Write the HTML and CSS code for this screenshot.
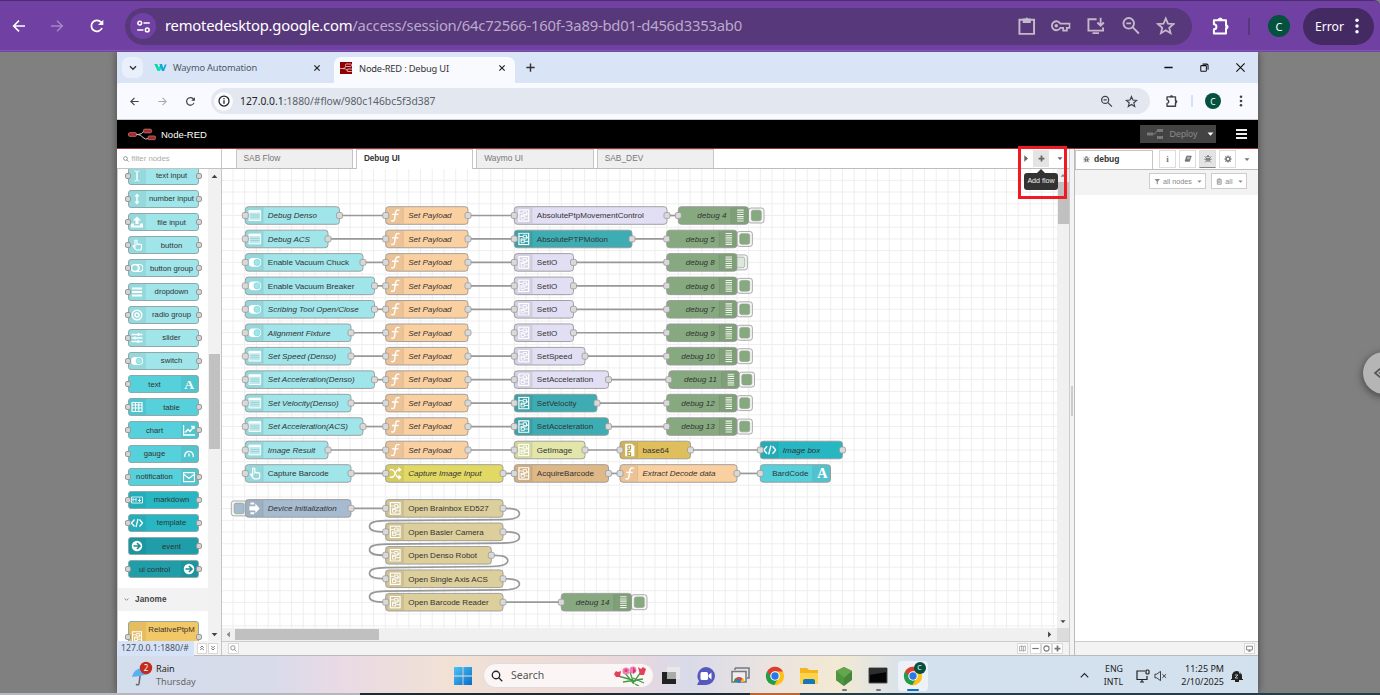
FILE: index.html
```html
<!DOCTYPE html>
<html lang="en">
<head>
<meta charset="utf-8">
<title>Node-RED : Debug UI</title>
<link rel="stylesheet" href="styles.css">
</head>
<body>
<svg class="defs" aria-hidden="true">
  <defs>
    <symbol id="back" viewBox="0 0 24 24"><path d="M21 12H4M12 4l-8 8 8 8" fill="none" stroke="currentColor" stroke-width="2.4"/></symbol>
    <symbol id="fwd" viewBox="0 0 24 24"><path d="M3 12h17M12 4l8 8-8 8" fill="none" stroke="currentColor" stroke-width="2.2"/></symbol>
    <symbol id="reload" viewBox="0 0 24 24"><path d="M19.5 15A8.3 8.3 0 1 1 18 6.2L20.5 9" fill="none" stroke="currentColor" stroke-width="2.6"/><path d="M21.5 2.500v8h-8z" fill="currentColor"/></symbol>
    <symbol id="tune" viewBox="0 0 24 24"><g fill="none" stroke="currentColor" stroke-width="2.4"><circle cx="6" cy="6.500" r="3"/><path d="M12 6.500h10M2 17.500h10"/><circle cx="18" cy="17.500" r="3"/></g></symbol>
    <symbol id="clip" viewBox="0 0 24 24"><path d="M3 4.500h18v17.500H3z" fill="none" stroke="currentColor" stroke-width="2.400"/><path d="M7 3h3.500a1.600 1.600 0 0 1 3 0H17v5.500H7z" fill="currentColor"/></symbol>
    <symbol id="key" viewBox="0 0 24 24"><path d="M11.500 9.500A5.500 5.500 0 1 0 11.500 14.500H15V18h4.500v-3.500H23v-5z" fill="none" stroke="currentColor" stroke-width="2.200"/><circle cx="6.500" cy="12" r="2.200" fill="currentColor"/></symbol>
    <symbol id="install" viewBox="0 0 24 24"><path d="M13 4H3v14h18v-4M8 21h8M18 2v9M14 8l4 4 4-4" fill="none" stroke="currentColor" stroke-width="2.300"/></symbol>
    <symbol id="zoomout" viewBox="0 0 24 24"><g fill="none" stroke="currentColor" stroke-width="2.300"><circle cx="9.500" cy="9" r="6.500"/><path d="M6.500 9h6M14.500 14l7.500 7.500"/></g></symbol>
    <symbol id="search" viewBox="0 0 24 24"><g fill="none" stroke="currentColor" stroke-width="2.600"><circle cx="10" cy="10" r="7.500"/><path d="M15.500 15.500l7 7"/></g></symbol>
    <symbol id="star" viewBox="0 0 24 24"><path d="M12 3l2.700 6.300 6.800.6-5.200 4.500 1.600 6.700L12 17.500l-5.900 3.600 1.600-6.700L2.500 9.900l6.800-.6z" fill="none" stroke="currentColor" stroke-width="2.200"/></symbol>
    <symbol id="puzzle" viewBox="0 0 24 24"><path d="M3.500 5H18v6.500a2 2 0 0 1 0 3.500v6H3.500v-5a3 3 0 0 0 0-6z" fill="none" stroke="currentColor" stroke-width="2.400" stroke-linejoin="round"/><path d="M8.500 5a2.600 2.600 0 0 1 5.200 0zM18 10.500a2.600 2.600 0 0 1 0 5.200z" fill="currentColor" stroke="currentColor"/></symbol>
    <symbol id="dots" viewBox="0 0 24 24"><g fill="currentColor"><circle cx="12" cy="3.500" r="2.600"/><circle cx="12" cy="12" r="2.600"/><circle cx="12" cy="20.500" r="2.600"/></g></symbol>
    <symbol id="info" viewBox="0 0 24 24"><circle cx="12" cy="12" r="10" fill="none" stroke="currentColor" stroke-width="2.500"/><path d="M12 10.500v7M12 6v2.700" stroke="currentColor" stroke-width="2.600"/></symbol>
    <symbol id="x" viewBox="0 0 24 24"><path d="M4 4l16 16M20 4L4 20" stroke="currentColor" stroke-width="3.500"/></symbol>
    <symbol id="xthin" viewBox="0 0 24 24"><path d="M1 1l22 22M23 1L1 23" stroke="currentColor" stroke-width="3"/></symbol>
    <symbol id="plus" viewBox="0 0 24 24"><path d="M12 1v22M1 12h22" stroke="currentColor" stroke-width="3.800"/></symbol>
    <symbol id="fatplus" viewBox="0 0 24 24"><path d="M12 2v20M2 12h20" stroke="currentColor" stroke-width="6"/></symbol>
    <symbol id="minus" viewBox="0 0 24 24"><path d="M1 12h22" stroke="currentColor" stroke-width="4"/></symbol>
    <symbol id="restore" viewBox="0 0 24 24"><g fill="none" stroke="currentColor" stroke-width="2.700"><rect x="2" y="7" width="15" height="15" rx="2"/><path d="M7 3h11q3.500 0 3.500 3.500V18"/></g></symbol>
    <symbol id="chev" viewBox="0 0 24 24"><path d="M3 7l9 9 9-9" fill="none" stroke="currentColor" stroke-width="4"/></symbol>
    <symbol id="chevup" viewBox="0 0 24 24"><path d="M2 17L12 7l10 10" fill="none" stroke="currentColor" stroke-width="3"/></symbol>
    <symbol id="dn" viewBox="0 0 24 24"><path d="M2 7h20L12 18z" fill="currentColor"/></symbol>
    <symbol id="up" viewBox="0 0 24 24"><path d="M2 17h20L12 6z" fill="currentColor"/></symbol>
    <symbol id="rt" viewBox="0 0 24 24"><path d="M7 2v20l11-10z" fill="currentColor"/></symbol>
    <symbol id="lf" viewBox="0 0 24 24"><path d="M17 2v20L6 12z" fill="currentColor"/></symbol>
    <symbol id="waymo" viewBox="0 0 36 24"><path d="M1 2h8l5 12 4-12h5l-7 20h-6z" fill="#08d8a4"/><path d="M15 2h7l4 12 4-10h5l-7 18h-6z" fill="#12a6dc"/><path d="M14 8l5 9-3 5h-5z" fill="#08e5bb"/></symbol>
    <symbol id="nrlogo" viewBox="0 0 28 13"><path d="M7 6.500h3q4 0 6-3.500M10 6.500q3 .5 5 3t6 1" fill="none" stroke="#d8c8c8" stroke-width="1"/><g fill="#a8282b" stroke="#c99090" stroke-width=".6"><rect x=".5" y="4.600" width="8" height="3.800" rx="1.200"/><rect x="15.500" y="1.100" width="8" height="3.800" rx="1.200"/><rect x="20" y="7.900" width="7.500" height="3.800" rx="1.200"/></g></symbol>
    <symbol id="nrtab" viewBox="0 0 24 24"><path d="M0 0h24v24H0z" fill="#8f0000"/><g fill="none" stroke="#e8d0d0" stroke-width="1.600"><path d="M0 13h6q4 0 6-5M6 13q6 0 9 4"/><rect x="11" y="4" width="12" height="5" rx="2"/><rect x="14" y="14" width="11" height="5" rx="2"/></g></symbol>
    <symbol id="bug" viewBox="0 0 24 24"><g fill="currentColor"><path d="M7 6a5 5 0 0 1 10 0z"/><path d="M6 8h5v13q-5-1-5-7zM13 8h5v6q0 6-5 7z"/></g><path d="M1 13h22M2 5l5 4M22 5l-5 4M3 22l5-5M21 22l-5-5" stroke="currentColor" stroke-width="2.600"/></symbol>
    <symbol id="book" viewBox="0 0 24 24"><path d="M8 3h14l-5 15H3zM3 19h14" fill="currentColor" stroke="currentColor" stroke-width="2"/><path d="M10 7h8M9 11h8" stroke="#fff" stroke-width="1.500"/></symbol>
    <symbol id="gear" viewBox="0 0 24 24"><circle cx="12" cy="12" r="6" fill="none" stroke="currentColor" stroke-width="5"/><path d="M12 1v4M12 19v4M1 12h4M19 12h4M4 4l3 3M17 17l3 3M20 4l-3 3M7 17l-3 3" stroke="currentColor" stroke-width="3"/></symbol>
    <symbol id="funnel" viewBox="0 0 24 24"><path d="M2 3h20l-8 9v11l-4-3v-8z" fill="currentColor"/></symbol>
    <symbol id="trash" viewBox="0 0 24 24"><path d="M3 6h18M9 5V2h6v3M5 6v16h14V6M10 10v8M14 10v8" fill="none" stroke="currentColor" stroke-width="3"/></symbol>
    <symbol id="map" viewBox="0 0 24 24"><path d="M2 5l7-2 6 2 7-2v16l-7 2-6-2-7 2zM9 3v16M15 5v16" fill="none" stroke="currentColor" stroke-width="2"/></symbol>
    <symbol id="ring" viewBox="0 0 24 24"><circle cx="12" cy="12" r="9" fill="none" stroke="currentColor" stroke-width="3.500"/></symbol>
    <symbol id="monitor" viewBox="0 0 24 24"><path d="M2 4h20v13H2zM7 21h10M12 17v4" fill="none" stroke="currentColor" stroke-width="3"/></symbol>
    <symbol id="dblup" viewBox="0 0 24 24"><path d="M5 11l7-7 7 7M5 20l7-7 7 7" fill="none" stroke="currentColor" stroke-width="4"/></symbol>
    <symbol id="dbldn" viewBox="0 0 24 24"><path d="M5 4l7 7 7-7M5 13l7 7 7-7" fill="none" stroke="currentColor" stroke-width="4"/></symbol>

    <symbol id="n-textin" viewBox="0 0 24 24"><path d="M7 2q5 0 5 3v14q0 3-5 3M17 2q-5 0-5 3v14q0 3 5 3" fill="none" stroke="#fff" stroke-width="1.800"/></symbol>
    <symbol id="n-num" viewBox="0 0 24 24"><path d="M12 4v16" stroke="#fff" stroke-width="3"/><path d="M12 1l5 6H7zM12 23l5-6H7z" fill="#fff"/></symbol>
    <symbol id="n-file" viewBox="0 0 24 24"><path d="M12 1l8 8h-5v7H9V9H4zM0 15h6v4h12v-4h6v8H0z" fill="#fff"/></symbol>
    <symbol id="n-hand" viewBox="0 0 24 24"><path d="M8 15V3q2-2 4 0v8q2-2 3 0 2-2 3 0 3-1 3 2v5q0 4-4 4h-6q-3-1-7-8 2-2 4 1z" fill="none" stroke="#fff" stroke-width="2.200"/></symbol>
    <symbol id="n-group" viewBox="0 0 24 24"><g fill="none" stroke="#fff" stroke-width="2.200"><rect x="0" y="5" width="24" height="14" rx="7"/><circle cx="8" cy="12" r="6.500"/><path d="M14 5.500q5 6.500 0 13"/></g></symbol>
    <symbol id="n-menu" viewBox="0 0 24 24"><path d="M2 5h20M2 12h20M2 19h20" stroke="#fff" stroke-width="4"/></symbol>
    <symbol id="n-radio" viewBox="0 0 24 24"><circle cx="12" cy="12" r="9.500" fill="none" stroke="#fff" stroke-width="3"/><circle cx="12" cy="12" r="4" fill="none" stroke="#fff" stroke-width="3"/></symbol>
    <symbol id="n-slider" viewBox="0 0 24 24"><path d="M1 5h22M1 12h22M1 19h22M15 2v6M8 9v6M14 16v6" stroke="#fff" stroke-width="2.800"/></symbol>
    <symbol id="n-switch" viewBox="0 0 24 24"><rect x="0" y="4" width="24" height="16" rx="8" fill="#fff"/><circle cx="16" cy="12" r="5.800" fill="#9fe6ea" stroke="#6ccfd4"/></symbol>
    <symbol id="n-A" viewBox="0 0 24 24"><text x="12" y="21" text-anchor="middle" font-family="Liberation Serif, serif" font-weight="700" font-size="27" fill="#fff">A</text></symbol>
    <symbol id="n-table" viewBox="0 0 24 24"><path d="M2 3h20v18H2zM2 8h20M2 14h20M9 3v18M15.500 3v18" fill="none" stroke="#fff" stroke-width="2.200"/></symbol>
    <symbol id="n-chart" viewBox="0 0 24 24"><path d="M1 2v20h23M4 17l6-6 4 4 7-9M16 5h6v5" fill="none" stroke="#fff" stroke-width="2.800"/></symbol>
    <symbol id="n-gauge" viewBox="0 0 24 24"><path d="M4 18a8.500 8.500 0 1 1 16 0M12 17V11" fill="none" stroke="#fff" stroke-width="2.600"/></symbol>
    <symbol id="n-mail" viewBox="0 0 24 24"><path d="M1 3h22v18H1zM2 7l10 8L22 7" fill="none" stroke="#fff" stroke-width="2.500"/></symbol>
    <symbol id="n-md" viewBox="0 0 24 24"><path d="M1 6h22v12H1z" fill="none" stroke="#fff" stroke-width="1.600"/><path d="M4 15V9l3 3 3-3v6M17 9v6M14 12l3 3 3-3" fill="none" stroke="#fff" stroke-width="2"/></symbol>
    <symbol id="n-code" viewBox="0 0 24 24"><path d="M7 5l-6 7 6 7M17 5l6 7-6 7M14 4l-4 16" fill="none" stroke="#fff" stroke-width="2.600"/></symbol>
    <symbol id="n-arrow" viewBox="0 0 24 24"><circle cx="12" cy="12" r="10.500" fill="#fff"/><path d="M5 12h12M12 6l6 6-6 6" fill="none" stroke="#1a8f97" stroke-width="3.200"/></symbol>
    <symbol id="n-sub" viewBox="0 0 24 24"><path d="M3 1.500h18v21H3z" fill="none" stroke="#fff" stroke-width="2.200"/><path d="M3 7.500h8V5h6v5h-6V7.500M21 16.500h-8V14H7v5h6v-2.500M17 8q4 0 1 3t-8 1-3 3" fill="none" stroke="#fff" stroke-width="1.700"/></symbol>
    <symbol id="n-form" viewBox="0 0 24 24"><path d="M1 3h22v18H1z" fill="#ffffff70" stroke="#fff" stroke-width="1.800"/><path d="M1 5h22" stroke="#fff" stroke-width="3"/><path d="M4 11h16M4 15h16" stroke="#86cdd1" stroke-width="1.400"/></symbol>
    <symbol id="n-fn" viewBox="0 0 24 24"><path d="M20 2.500q-6-3-7.500 4.500L11 18q-1 6-6.500 3.500M6 10h12" fill="none" stroke="#fff" stroke-width="2.600"/></symbol>
    <symbol id="n-list" viewBox="0 0 24 24"><path d="M6 2h12M6 6h12M6 10h12M6 14h12M6 18h12M6 22h12" stroke="#eef5ec" stroke-width="2"/></symbol>
    <symbol id="n-64" viewBox="0 0 24 24"><path d="M4 0h12l5 5v19H4z" fill="#fff"/><path d="M9 4v6h5V4H9M14 13H9v9h5v-5H9" fill="none" stroke="#b59b3c" stroke-width="2"/></symbol>
    <symbol id="n-change" viewBox="0 0 24 24"><path d="M2 5h4q3 0 6 7t6 7h3M2 19h4q3 0 6-7t6-7h3" fill="none" stroke="#fff" stroke-width="2.400"/><path d="M18 0l6 5-6 5zM18 14l6 5-6 5z" fill="#fff"/></symbol>
    <symbol id="n-inject" viewBox="0 0 24 24"><path d="M2 8h11V3l8 9-8 9v-5H2z" fill="#fff"/><path d="M4 1h7v4H4zM4 19h7v4H4z" fill="#fff"/></symbol>
    <symbol id="chrome" viewBox="0 0 24 24"><circle cx="12" cy="12" r="11" fill="#fbc116"/><path d="M12 12L2.500 6.500a11 11 0 0 0 8.700 16.400L16 14.500z" fill="#219b4c"/><path d="M2.500 6.500A11 11 0 0 1 21.500 6.500H12L8 13z" fill="#df3c30"/><circle cx="12" cy="12" r="5.700" fill="#fff"/><circle cx="12" cy="12" r="4.400" fill="#2878e8"/></symbol>
  </defs>
</svg>

<header class="host">
  <svg class="h-back"><use href="#back"/></svg>
  <svg class="h-fwd"><use href="#fwd"/></svg>
  <svg class="h-reload"><use href="#reload"/></svg>
  <div class="h-url">
    <span class="h-site"><svg><use href="#tune"/></svg></span>
    <span class="h-text"><b>remotedesktop.google.com</b>/access/session/64c72566-160f-3a89-bd01-d456d3353ab0</span>
    <span class="h-tools">
      <svg><use href="#clip"/></svg><svg><use href="#key"/></svg><svg><use href="#install"/></svg><svg><use href="#zoomout"/></svg><svg><use href="#star"/></svg>
    </span>
  </div>
  <svg class="h-puzzle"><use href="#puzzle"/></svg>
  <i class="h-sep"></i>
  <span class="h-avatar">C</span>
  <span class="h-error">Error<svg><use href="#dots"/></svg></span>
</header>

<main class="stage">
  <section class="remote">
    <div class="tabstrip">
      <span class="t-menu"><svg><use href="#chev"/></svg></span>
      <div class="t-tab"><svg class="t-waymo"><use href="#waymo"/></svg><span>Waymo Automation</span><svg class="t-x"><use href="#x"/></svg></div>
      <div class="t-tab t-on"><svg class="t-fav"><use href="#nrtab"/></svg><span>Node-RED : Debug UI</span><svg class="t-x"><use href="#x"/></svg></div>
      <svg class="t-new"><use href="#plus"/></svg>
      <div class="t-win"><svg><use href="#minus"/></svg><svg><use href="#restore"/></svg><svg><use href="#xthin"/></svg></div>
    </div>
    <div class="toolbar">
      <svg class="b-nav"><use href="#back"/></svg><svg class="b-nav b-dim"><use href="#fwd"/></svg><svg class="b-nav"><use href="#reload"/></svg>
      <div class="b-url"><span class="b-info"><svg><use href="#info"/></svg></span><span class="b-text"><b>127.0.0.1</b>:1880/#flow/980c146bc5f3d387</span><svg class="b-zoom"><use href="#zoomout"/></svg><svg class="b-star"><use href="#star"/></svg></div>
      <svg class="b-puzzle"><use href="#puzzle"/></svg><i class="b-sep"></i><span class="b-avatar">C</span><svg class="b-dots"><use href="#dots"/></svg>
    </div>
    <div class="nr-head">
      <svg class="nr-logo"><use href="#nrlogo"/></svg><span>Node-RED</span>
      <div class="nr-deploy"><svg viewBox="0 0 16 10"><path d="M5 5h3q1.500-4 3-3.500" fill="none" stroke="#777"/><path d="M0 3.500h6v3H0zM10 0h6v3h-6zM10 7h6v3h-6z" fill="#777"/></svg><span>Deploy</span><svg class="nr-caret"><use href="#dn"/></svg></div>
      <div class="nr-menu"><i></i><i></i><i></i></div>
    </div>
    <div class="editor">
      <aside class="palette">
        <div class="p-search"><svg><use href="#search"/></svg>filter nodes</div>
        <div class="p-body">
          <div class="p-view">
            <div class="p-list" id="palette"></div>
            <div class="p-cat"><svg><use href="#chev"/></svg>Janome</div>
            <div class="p-list p-second" id="palette2"></div>
          </div>
          <div class="p-scroll"><svg><use href="#up"/></svg><i></i><svg><use href="#dn"/></svg></div>
        </div>
        <div class="p-foot"><span class="p-status">127.0.0.1:1880/#</span><b><svg><use href="#dblup"/></svg></b><b><svg><use href="#dbldn"/></svg></b></div>
      </aside>
      <section class="work">
        <div class="w-tabs"><span>SAB Flow</span><span class="w-on">Debug UI</span><span>Waymo UI</span><span>SAB_DEV</span>
          <div class="w-btns"><svg><use href="#rt"/></svg><b><svg><use href="#fatplus"/></svg></b><svg><use href="#dn"/></svg></div>
        </div>
        <div class="w-main">
          <div class="w-col">
            <svg class="canvas" id="canvas" viewBox="222 169 835 459" width="835" height="459"></svg>
            <div class="w-hs"><svg><use href="#lf"/></svg><i></i><svg><use href="#rt"/></svg></div>
          </div>
          <div class="w-vs"><svg class="w-dim"><use href="#up"/></svg><i></i><svg><use href="#dn"/></svg><em></em></div>
        </div>
        <div class="w-foot"><b><svg><use href="#search"/></svg></b><div><b><svg><use href="#map"/></svg></b><b><svg><use href="#minus"/></svg></b><b><svg><use href="#ring"/></svg></b><b><svg><use href="#fatplus"/></svg></b></div></div>
      </section>
      <div class="split"><i></i></div>
      <aside class="side">
        <div class="s-tabs"><div class="s-tab"><svg><use href="#bug"/></svg>debug</div>
          <b class="s-i">i</b><b><svg><use href="#book"/></svg></b><b class="s-on"><svg><use href="#bug"/></svg></b><b><svg><use href="#gear"/></svg></b><svg class="s-caret"><use href="#dn"/></svg></div>
        <div class="s-filter"><span><svg><use href="#funnel"/></svg>all nodes<svg class="s-dn"><use href="#dn"/></svg></span><span><svg><use href="#trash"/></svg>all<svg class="s-dn"><use href="#dn"/></svg></span></div>
        <div class="s-body"></div>
        <div class="s-foot"><b><svg><use href="#monitor"/></svg></b></div>
      </aside>
    </div>
    <footer class="taskbar">
      <div class="k-weather">
        <svg viewBox="0 0 22 26"><path d="M1 16Q3 7 12 7q4 1 6 6l-5 1-4 1z" fill="#59b1ee"/><path d="M9 15l-1 8q-1 2-3 0" fill="none" stroke="#667" stroke-width="1.500"/><circle cx="15" cy="7" r="6.200" fill="#c42b1c"/><text x="15" y="10" text-anchor="middle" class="k-count">2</text></svg>
        <div>Rain<br><span>Thursday</span></div>
      </div>
      <svg class="k-start" viewBox="0 0 18 18"><defs><linearGradient id="wg" x2="1" y2="1"><stop stop-color="#4cc5f4"/><stop offset="1" stop-color="#0a6cc8"/></linearGradient></defs><path d="M0 0h8.600v8.600H0zM9.400 0H18v8.600H9.400zM0 9.400h8.600V18H0zM9.400 9.400H18V18H9.400z" fill="url(#wg)"/></svg>
      <div class="k-search"><svg><use href="#search"/></svg>Search
        <svg class="k-flowers" viewBox="0 0 36 20"><path d="M5 10l18 5M12 7l8 10 8-11M17 6l4 12M10 16l20-3M22 18l4 2M20 12l11 5" fill="none" stroke="#449b48" stroke-width="1.300"/><g fill="#e4405b"><path d="M1 8l2-3 2 1 3-1-1 6H3z"/><path d="M25 1l3 2 2-2 3 2-2 6h-4z"/></g><g fill="#f07eb0"><circle cx="13" cy="5" r="3.600"/><circle cx="20" cy="4" r="3.400"/></g><circle cx="13" cy="4.500" r="1.500" fill="#d83f75"/><path d="M20 1l3 4-3 3z" fill="#d63476"/></svg></div>
      <div class="k-apps">
        <span><svg viewBox="0 0 20 20"><path d="M1 6h14v12H1z" fill="#222"/><path d="M6 1h13v12H6z" fill="#e8e8ea"/><path d="M6 6h9v7H6z" fill="#aaa"/></svg></span>
        <span><svg viewBox="0 0 20 20"><path d="M10 1a9 9 0 0 1 0 18H1l2-4A9 9 0 0 1 10 1z" fill="#5558bd"/><rect x="4.500" y="6" width="7.500" height="8" rx="1.500" fill="#fff"/><path d="M12.500 9l3-2.500v7l-3-2.500z" fill="#fff"/></svg></span>
        <span><svg viewBox="0 0 20 20"><path d="M5 2h14v10h-2M5 2v2" fill="none" stroke="#747980" stroke-width="1.500"/><path d="M2 5.500h14V16H2z" fill="#eee" stroke="#747980" stroke-width="1.500"/><path d="M4 16a5 5 0 0 1 10 0z" fill="#e34033"/><path d="M4 16q0-3 2-4l2 4z" fill="#269b4c"/><path d="M10 16l3-4q2 2 1 4z" fill="#fbbc05"/><circle cx="9" cy="15" r="2" fill="#2d78e7"/></svg></span>
        <span><svg><use href="#chrome"/></svg></span>
        <span><svg viewBox="0 0 20 20"><path d="M1 2h7l2 2h9v14H1z" fill="#f4b51c"/><path d="M1 7h18v11H1z" fill="#ffd24b"/><path d="M4 18v-3q0-2 2-2h8q2 0 2 2v3z" fill="#1477ba"/></svg></span>
        <span class="k-run"><svg viewBox="0 0 20 20"><path d="M10 1l8 4v9l-8 6-8-6V5z" fill="#43873b"/><path d="M10 1l8 4-8 7-8-7z" fill="#65a64d"/><path d="M2 5l8 7v8l-8-6z" fill="#4d963d"/></svg></span>
        <span class="k-run"><svg viewBox="0 0 20 20"><path d="M1 2h18v15H1z" fill="#050505" stroke="#555"/><path d="M1 2h18v4L1 9z" fill="#2c2e30"/></svg></span>
        <span class="k-act"><svg><use href="#chrome"/></svg><b>C</b></span>
      </div>
      <svg class="k-up"><use href="#chevup"/></svg>
      <div class="k-lang">ENG<br>INTL</div>
      <svg class="k-net" viewBox="0 0 14 14"><path d="M9 2H1v8.500h10V7M4 13h4M6 10.500V13" fill="none" stroke="#222" stroke-width="1.200"/><rect x="10" y="1" width="3" height="4" rx="1" fill="none" stroke="#222" stroke-width="1.200"/></svg>
      <svg class="k-vol" viewBox="0 0 14 12"><path d="M1 4h2l4-3v10L3 8H1zM9 4l4 4M13 4L9 8" fill="none" stroke="#333"/></svg>
      <div class="k-time">11:25 PM<br>2/10/2025</div>
      <svg class="k-bell" viewBox="0 0 12 14"><path d="M1 10V6q1-4 5-4 5 1 5 5v3h1v1H0v-1zM4 11h4v2H4z" fill="#222"/><path d="M8 1h3L8 4h3M4 6h3L4 9h3" fill="none" stroke="#d3e0ee" stroke-width=".8"/></svg>
    </footer>
    <div class="tip">Add flow</div>
    <div class="mark"></div>
  </section>
  <div class="handle"><svg viewBox="0 0 16 16"><path d="M9 3L3 8l6 5M17 3l-9 5 9 5" fill="none" stroke="#555" stroke-width="1.700"/></svg></div>
</main>
<div class="edge"></div>
<script src="app.js"></script>
</body>
</html>
```

FILE: styles.css
```css
* { box-sizing: border-box; }
body { margin: 0; width: 1380px; height: 695px; overflow: hidden; background: #808080; font-family: "Noto Sans", sans-serif; display: flex; flex-direction: column; }
svg { display: block; flex: none; }
i { display: block; }
b { font-weight: 400; }
.defs { position: absolute; width: 0; height: 0; }

/* outer browser bar */
.host { height: 52px; flex: none; background: #7041a2; border-top: 1px solid #4c2d70; border-bottom: 1px solid #7244a4; box-shadow: inset 0 -1px #8158ae; display: flex; align-items: center; color: #fff; border-radius: 0 6px 0 0; }
.h-back, .h-fwd, .h-reload { width: 16px; height: 16px; }
.h-back { margin-left: 11px; }
.h-fwd { margin-left: 22px; color: #a587c4; }
.h-reload { margin-left: 24px; }
.h-url { margin-left: 20px; width: 1067px; height: 37px; border-radius: 19px; background: #57387b; display: flex; align-items: center; padding-left: 5px; }
.h-site { width: 26px; height: 26px; border-radius: 50%; background: #7041a2; display: flex; align-items: center; justify-content: center; }
.h-site svg { width: 15px; height: 15px; }
.h-text { margin-left: 9px; font-size: 14.800px; letter-spacing: -.22px; color: #bbaac9; white-space: nowrap; margin-top: -2px; }
.h-text b { color: #fff; }
.h-tools { margin-left: auto; margin-right: 17px; display: flex; gap: 15.200px; color: #c4b9ca; }
.h-tools svg { width: 19.500px; height: 19.500px; }
.h-puzzle { width: 20px; height: 20px; margin-left: 19px; }
.h-sep { width: 2px; height: 17px; background: #57387b; margin-left: 17px; }
.h-avatar { margin-left: 18px; width: 22px; height: 22px; border-radius: 50%; background: #04513f; font-size: 11px; display: flex; align-items: center; justify-content: center; }
.h-error { margin-left: 13px; width: 71px; height: 37px; border-radius: 19px; background: #442a62; display: flex; align-items: center; padding-left: 12px; font-size: 12.200px; }
.h-error svg { width: 16px; height: 16px; margin-left: 5px; }

.stage { position: relative; height: 641px; flex: none; padding-left: 117px; background: #808080; overflow: hidden; }
.edge { height: 2px; background: linear-gradient(90deg, #b5b7bd 0 360px, #1f2c32 360px 750px, #bc672c 750px 800px, #263e48 800px); }
.remote { position: relative; width: 1141px; height: 641px; display: flex; flex-direction: column; box-shadow: 0 0 8px #0007; background: #f3f3f3; }

/* inner browser */
.tabstrip { height: 31px; background: #d9e4f7; display: flex; align-items: center; color: #333; font-size: 9.300px; letter-spacing: -.18px; }
.t-menu { width: 21px; height: 21px; margin-left: 5px; background: #eaf0fb; border-radius: 7px; display: flex; align-items: center; justify-content: center; }
.t-menu svg { width: 8px; height: 8px; }
.t-tab { display: flex; align-items: center; white-space: nowrap; height: 31px; width: 191px; padding-left: 11px; color: #515865; }
.t-on { height: 26px; align-self: flex-end; width: 181px; background: #f9fafe; border-radius: 7px 7px 0 0; padding: 0 0 4px 6px; color: #333; }
.t-waymo { width: 13px; height: 9px; margin-right: 6px; }
.t-fav { width: 12px; height: 12px; margin-right: 7px; }
.t-x { width: 8px; height: 8px; margin-left: auto; margin-right: 13px; color: #222; }
.t-on .t-x { margin-right: 9px; }
.t-new { width: 9px; height: 9px; margin-left: 11px; }
.t-win { margin-left: auto; display: flex; gap: 27px; margin-right: 13px; color: #111; }
.t-win svg { width: 9px; height: 9px; }
.toolbar { height: 37px; background: #f9faff; border-bottom: 1px solid #c9cbd0; display: flex; align-items: center; color: #3d4249; border-radius: 5px 5px 0 0; }
.b-nav { width: 11px; height: 11px; margin-right: 17px; }
.b-nav:first-child { margin-left: 12px; }
.b-dim { color: #a2a5aa; }
.b-url { height: 26px; width: 939px; margin-left: -2px; background: #e3e8f0; border-radius: 13px; display: flex; align-items: center; }
.b-info { width: 19px; height: 19px; background: #fafbfe; border-radius: 50%; margin-left: 3px; display: flex; align-items: center; justify-content: center; color: #222; }
.b-info svg { width: 12px; height: 12px; }
.b-text { font-size: 10.300px; margin-left: 7px; color: #5b6068; white-space: nowrap; }
.b-text b { color: #22252a; }
.b-zoom { width: 13px; height: 13px; margin-left: auto; }
.b-star { width: 13px; height: 13px; margin: 0 12px; }
.b-puzzle { width: 14px; height: 14px; margin-left: 15px; }
.b-sep { width: 2px; height: 12px; background: #d3e2fb; margin-left: 12px; }
.b-avatar { margin-left: 12px; width: 16px; height: 16px; border-radius: 50%; background: #04513f; color: #fff; font-size: 8.500px; display: flex; align-items: center; justify-content: center; }
.b-dots { width: 12px; height: 12px; margin-left: 14px; }

/* Node-RED header */
.nr-head { height: 29px; background: #000; border-bottom: 1px solid #983334; display: flex; align-items: center; color: #fff; font: 9.500px "Liberation Sans", Arial, sans-serif; }
.nr-logo { width: 28px; height: 13px; margin: 0 5px 0 11px; }
.nr-deploy { margin-left: auto; width: 76px; height: 18px; background: #434343; color: #8b8b8b; display: flex; align-items: center; padding-left: 7px; font-size: 9px; }
.nr-deploy > svg { width: 16px; height: 10px; margin-right: 6.500px; }
.nr-deploy .nr-caret { width: 7px; height: 8px; margin: 0 0 0 9px; color: #fff; }
.nr-menu { margin: 0 11px 0 20px; width: 11px; display: flex; flex-direction: column; gap: 2px; }
.nr-menu i { height: 2px; background: #eee; }

/* editor */
.editor { height: 507px; display: flex; font-family: "Liberation Sans", Arial, sans-serif; border-bottom: 1px solid #bbb; }
.palette { width: 105px; border-right: 1px solid #c5c5c5; display: flex; flex-direction: column; background: #fff; }
.p-search { height: 20px; border-bottom: 1px solid #c3c3c3; display: flex; align-items: center; padding-left: 6px; gap: 2.500px; color: #aaa; font-size: 7.800px; }
.p-search svg { width: 6px; height: 6px; color: #666; }
.p-body { height: 472px; display: flex; }
.p-view { width: 91px; overflow: hidden; border-left: 1px solid #ccc; }
.p-list { display: flex; flex-direction: column; gap: 5.150px; padding-left: 9.500px; margin-top: -2.200px; }
.p-node { position: relative; height: 18px; width: 71px; border: 1px solid #8fa9ab; border-radius: 3px; display: flex; font-size: 7.700px; color: #333; }
.p-node > b { width: 17px; background: #0000000d; display: flex; align-items: center; justify-content: center; }
.p-node > b svg { width: 12px; height: 12px; }
.p-node > span { flex: 1; display: flex; align-items: center; justify-content: center; white-space: nowrap; }
.p-node.r { flex-direction: row-reverse; }
.p-node > u { position: absolute; width: 6px; height: 6px; top: 5px; background: #d4d4d4; border: 1px solid #999; border-radius: 2px; }
.p-node > u.in { left: -4px; }
.p-node > u.out { right: -4px; }
.p-cat { height: 23px; margin-top: 10px; background: #f2f2f2; display: flex; align-items: center; gap: 6px; padding-left: 6px; font-size: 8.200px; font-weight: 700; color: #444; letter-spacing: .1px; }
.p-cat svg { width: 5px; height: 5px; color: #777; }
.p-second { margin-top: 10px; }
.p-second .p-node { height: 28px; }
.p-second .p-node > u { top: 12px; }
.p-second .p-node > b svg { margin-top: 4px; }
.p-second .p-node > span { align-items: flex-start; line-height: 14px; padding-top: 1px; font-size: 7.800px; }
.p-scroll { width: 13px; background: #f1f1f1; display: flex; flex-direction: column; align-items: center; color: #444; padding: 4px 0 3px; }
.p-scroll svg { width: 7px; height: 7px; }
.p-scroll i { width: 11px; height: 95px; background: #c1c1c1; margin: 174px 0 auto; }
.p-foot { height: 14px; display: flex; align-items: center; background: #f3f3f3; gap: 1px; }
.p-status { width: 77px; height: 15px; background: #d6e2f8; font: 8.700px/14px "Noto Sans", sans-serif; color: #4b5361; padding-left: 4px; margin-right: 2px; white-space: nowrap; }
.p-foot b, .w-foot b, .s-foot b { width: 11px; height: 11px; background: #fff; border: 1px solid #d9d9d9; color: #777; display: flex; align-items: center; justify-content: center; }
.p-foot b { width: 10px; }
.p-foot b svg { width: 6px; height: 6px; }
.work { width: 847px; display: flex; flex-direction: column; background: #fff; }
.w-tabs { height: 21px; border-bottom: 1px solid #bdbdbd; display: flex; align-items: flex-end; padding-left: 13.500px; gap: 2.900px; }
.w-tabs > span { width: 117.500px; height: 19px; border: 1px solid #c6c6c6; border-bottom: 0; background: #efefef; font-size: 8.400px; line-height: 17px; padding-left: 7px; color: #777; white-space: nowrap; }
.w-tabs > .w-on { background: #fff; color: #333; font-weight: 700; font-size: 8.200px; height: 20px; margin-bottom: -1px; line-height: 18px; }
.w-btns { margin-left: auto; display: flex; align-items: center; height: 19px; color: #666; }
.w-btns svg { width: 8px; height: 9px; }
.w-btns b { width: 16px; height: 17px; background: #e4e4e4; margin: 0 8px 0 3px; display: flex; align-items: center; justify-content: center; }
.w-btns b svg { width: 7px; height: 7px; }
.w-btns > svg:last-child { width: 6px; margin-right: 6px; }
.w-main { height: 472px; display: flex; }
.w-col { width: 835px; }
.canvas { width: 835px; height: 459px; }
.canvas text { font-family: "Liberation Sans", Arial, sans-serif; font-size: 8.050px; fill: #333; }
.canvas .it { font-style: italic; }
.w-hs { height: 13px; background: #f0f0f0; display: flex; align-items: center; color: #444; padding: 0 4px 0 3px; }
.w-hs svg { width: 7px; height: 7px; }
.w-hs svg:first-child { color: #888; }
.w-hs i { width: 144px; height: 11px; background: #c0c0c0; margin: 0 auto 0 3px; }
.w-vs { width: 12px; background: #f0f0f0; display: flex; flex-direction: column; align-items: center; color: #444; }
.w-vs svg { width: 6px; height: 7px; margin-top: 3px; }
.w-vs .w-dim { color: #888; }
.w-vs i { width: 11px; height: 42px; background: #c0c0c0; margin: 3px 0 auto; }
.w-vs em { width: 12px; height: 13px; background: #dcdcdc; margin-top: 3px; }
.w-foot { height: 14px; border-top: 1px solid #ccc; background: #f3f3f3; display: flex; align-items: center; justify-content: space-between; padding: 0 6px; }
.w-foot svg, .s-foot svg { width: 7px; height: 7px; }
.w-foot div { display: flex; }
.w-foot div b:first-child { margin-right: 2px; }
.split { width: 6px; background: #f3f3f3; border-left: 1px solid #ccc; border-right: 1px solid #bbb; display: flex; align-items: center; justify-content: center; }
.split i { width: 2px; height: 30px; background: #ccc; margin-top: -3px; }
.side { width: 183px; background: #fff; display: flex; flex-direction: column; }
.s-tabs { height: 21px; border-bottom: 1px solid #bdbdbd; display: flex; align-items: center; }
.s-tab { height: 19px; width: 78px; margin-top: 1px; border: 1px solid #c6c6c6; border-bottom: 0; background: #fff; display: flex; align-items: center; gap: 4px; font-size: 8.500px; font-weight: 700; padding: 0 0 2px 7px; color: #333; margin-right: 6px; }
.s-tab svg { width: 7px; height: 7px; color: #777; }
.s-tabs > b { width: 17px; height: 18px; border: 1px solid #ddd; margin-right: 3px; display: flex; align-items: center; justify-content: center; color: #777; }
.s-tabs > b svg { width: 8px; height: 8px; }
.s-tabs > .s-on { background: #e4e4e4; border-bottom: 1px solid #888; }
.s-tabs > .s-i { font: 700 9px "Liberation Serif", serif; }
.s-caret { width: 6px; height: 7px; color: #777; margin-left: 5px; }
.s-filter { height: 25px; background: #f3f3f3; display: flex; align-items: center; justify-content: flex-end; gap: 5px; padding: 0 11px 2px 0; }
.s-filter span { height: 16px; border: 1px solid #ccc; background: #fff; display: flex; align-items: center; font-size: 7.200px; color: #888; padding: 0 3px 0 4px; gap: 2.500px; white-space: nowrap; }
.s-filter svg { width: 6.500px; height: 7px; }
.s-filter .s-dn { width: 5px; margin-left: 3px; }
.s-body { height: 447px; }
.s-foot { height: 14px; border-top: 1px solid #ccc; background: #f3f3f3; display: flex; justify-content: flex-end; padding: 1px 3px; }

/* taskbar */
.taskbar { height: 37px; padding-top: 2px; background: linear-gradient(90deg, #d3ddec 0, #d8dbea 150px, #e9dae5 225px, #f1e1d5 330px, #eedbd6 440px, #e8d7df 520px, #d9dae9 570px, #eae3e0 650px, #f3e9d3 720px, #d3e1ef 800px, #d3e1ef 100%); display: flex; align-items: center; font-size: 9.100px; color: #222; line-height: 12.500px; }
.k-weather { width: 219px; margin-left: 14px; display: flex; align-items: center; }
.k-weather svg { width: 22px; height: 26px; margin: -3px 3px 0 0; }
.k-weather span { color: #666; }
.k-count { font-size: 8px; fill: #fff; }
.k-start { width: 18px; height: 18px; margin-left: 104px; }
.k-search { width: 171px; height: 25px; margin-left: 11px; border: 1px solid #ddd; border-radius: 13px; background: #fbf6f5; display: flex; align-items: center; padding-left: 7px; font-size: 10.500px; color: #555; }
.k-search > svg:first-child { width: 12px; height: 12px; margin-right: 8px; color: #222; }
.k-search .k-flowers { width: 36px; height: 20px; margin-left: auto; margin-right: 4px; }
.k-apps { display: flex; margin-left: 2px; gap: 4.500px; }
.k-apps span { position: relative; width: 30px; height: 30px; display: flex; align-items: center; justify-content: center; }
.k-apps svg { width: 20px; height: 20px; }
.k-apps .k-act { background: #edf2f9; border-radius: 4px; }
.k-run::after, .k-act::after { content: ""; position: absolute; left: 13px; bottom: 0; width: 5px; height: 2px; border-radius: 1px; background: #777; }
.k-act::after { width: 12px; left: 9px; background: #0873c9; }
.k-act b { position: absolute; top: 1px; right: 2px; width: 12px; height: 12px; border-radius: 50%; background: #04513f; color: #fff; font-size: 7px; line-height: 12px; text-align: center; }
.k-up { width: 9px; height: 9px; margin-left: auto; }
.k-lang { margin-left: 15px; text-align: right; font-size: 8.800px; }
.k-net { width: 14px; height: 14px; margin-left: 13px; }
.k-vol { width: 13px; height: 12px; margin-left: 4px; }
.k-time { width: 57px; text-align: right; font-size: 9px; }
.k-bell { width: 12px; height: 14px; margin: 0 15px 0 7px; }

/* overlays */
.tip { position: absolute; left: 907px; top: 121px; width: 34px; height: 17px; border-radius: 3px; background: #333; color: #eee; font: 7.100px/16px "Liberation Sans", Arial, sans-serif; text-align: center; white-space: nowrap; }
.tip::before { content: ""; position: absolute; left: 13px; top: -4px; border: 4px solid transparent; border-top: 0; border-bottom-color: #333; }
.mark { position: absolute; left: 901px; top: 94px; width: 49px; height: 53px; border: 3px solid #f01a23; }
.handle { position: absolute; left: 1363px; top: 300px; width: 42px; height: 42px; border-radius: 50%; background: #b5b5b5; box-shadow: 0 2px 8px #0008; display: flex; align-items: center; padding-left: 9px; }
.handle svg { width: 16px; height: 16px; }
```

FILE: app.js
```javascript
const C = {
  aqua: '#9fe5e9', mid: '#56d0da', deep: '#27b7c3', dark: '#1f9da8', orange: '#fbd0a1', lilac: '#e2dff4',
  teal: '#3eadb3', debug: '#87a980', lime: '#e2e6a9', base: '#dfbe5c', change: '#e2d964',
  brown: '#deb887', inject: '#a6bbcf', sand: '#ddcf9b', amber: '#f2c866'
};

// label, fill, icon, ports, icon on the right
const palette = [
  ['text input', C.aqua, 'textin', 'io'], ['number input', C.aqua, 'num', 'io'], ['file input', C.aqua, 'file', 'io'],
  ['button', C.aqua, 'hand', 'io'], ['button group', C.aqua, 'group', 'io'], ['dropdown', C.aqua, 'menu', 'io'],
  ['radio group', C.aqua, 'radio', 'io'], ['slider', C.aqua, 'slider', 'io'], ['switch', C.aqua, 'switch', 'io'],
  ['text', C.mid, 'A', 'i', 1], ['table', C.mid, 'table', 'io'], ['chart', C.mid, 'chart', 'io', 1],
  ['gauge', C.mid, 'gauge', 'i', 1], ['notification', C.mid, 'mail', 'io', 1], ['markdown', C.deep, 'md', 'io'],
  ['template', C.deep, 'code', 'io'], ['event', C.dark, 'arrow', 'o'], ['ui control', C.dark, 'arrow', 'io', 1]
];
function paletteNode([label, fill, icon, ports, right]) {
  return `<div class="p-node ${right ? 'r' : ''}" style="background:${fill}"><b><svg><use href="#n-${icon}"/></svg></b><span>${label}</span>` +
    (ports.includes('i') ? '<u class="in"></u>' : '') + (ports.includes('o') ? '<u class="out"></u>' : '') + '</div>';
}
document.getElementById('palette').innerHTML = palette.map(paletteNode).join('');
document.getElementById('palette2').innerHTML = paletteNode(['RelativePtpM', C.amber, 'sub', 'io']);

const Y0 = 215.5, STEP = 23.45, H = 17.6;
let wires = '', nodes = '';
const port = (x, y) => `<rect x="${x - 3}" y="${y - 3}" width="6" height="6" rx="1.700" fill="#d9d9d9" stroke="#999" stroke-width=".8"/>`;
function node(x, r, y, fill, icon, label, o = {}) {
  const w = r - x, t = y - H / 2, ix = o.right ? r - H : x;
  if (o.button) {
    const bx = o.button === 'left' ? x - 14 : r - (o.off ? 5 : 0);
    nodes += `<rect x="${bx}" y="${y - 7.5}" width="15.500" height="15" rx="2.500" fill="#f4f4f4" stroke="#999" stroke-width=".8"/>` +
      `<rect x="${bx + 2.8}" y="${y - 5.3}" width="10" height="10.600" rx="2" fill="${o.off ? '#dde7dc' : fill}" stroke="#8aa088" stroke-width=".6"/>`;
  }
  nodes += `<rect x="${x}" y="${t}" width="${w}" height="${H}" rx="3" fill="${fill}" stroke="#999" stroke-width=".9"/>` +
    `<rect x="${ix + .4}" y="${t + .5}" width="${H - .6}" height="${H - 1}" rx="2" fill="#000" opacity=".06"/>` +
    `<path d="M${o.right ? ix : ix + H} ${t + .5}v${H - 1}" stroke="#000" opacity=".12" stroke-width=".7"/>` +
    `<use href="#n-${icon}" x="${ix + 3}" y="${y - 6.5}" width="13" height="13"/>` +
    `<text class="${o.it ? 'it' : ''}" x="${o.right ? ix - 4.5 : x + 22.5}" y="${y + 2.8}" ${o.right ? 'text-anchor="end"' : ''}>${label}</text>`;
  if (!o.noIn) nodes += port(x, y);
  if (!o.noOut) nodes += port(r, y);
}
const wire = (a, y, b, y2 = y) => { wires += `<path d="M${a} ${y}L${b} ${y2}"/>`; };

// first-column right edge, label, italic, icon, third-column right edge, label, fill, debug left edge, debug label
const rows = [
  [339.5, 'Debug Denso', 1, 'form', 667, 'AbsolutePtpMovementControl', C.lilac, 678.3, 'debug 4'],
  [328, 'Debug ACS', 1, 'form', 632, 'AbsolutePTPMotion', C.teal, 666.7, 'debug 5'],
  [363, 'Enable Vacuum Chuck', 0, 'switch', 573.5, 'SetIO', C.lilac, 666.7, 'debug 8'],
  [374.5, 'Enable Vacuum Breaker', 0, 'switch', 573.5, 'SetIO', C.lilac, 666.7, 'debug 6'],
  [374.5, 'Scribing Tool Open/Close', 1, 'switch', 573.5, 'SetIO', C.lilac, 666.7, 'debug 7'],
  [351, 'Alignment Fixture', 1, 'switch', 573.5, 'SetIO', C.lilac, 666.7, 'debug 9'],
  [351, 'Set Speed (Denso)', 1, 'form', 585, 'SetSpeed', C.lilac, 666.7, 'debug 10'],
  [374.5, 'Set Acceleration(Denso)', 1, 'form', 608.5, 'SetAcceleration', C.lilac, 668.8, 'debug 11'],
  [351, 'Set Velocity(Denso)', 1, 'form', 597, 'SetVelocity', C.teal, 666.7, 'debug 12'],
  [363, 'Set Acceleration(ACS)', 1, 'form', 608.5, 'SetAcceleration', C.teal, 666.7, 'debug 13'],
  [328, 'Image Result', 1, 'form', 585, 'GetImage', C.lime]
];
rows.forEach(([r, label, it, icon, r3, l3, c3, dx, dl], i) => {
  const y = Y0 + STEP * i;
  wire(r, y, 385.7);
  if (i !== 5) wire(468, y, 514.3);
  node(245.3, r, y, C.aqua, icon, label, { it });
  node(385.7, 468, y, C.orange, 'fn', 'Set Payload', { it: 1 });
  node(514.3, r3, y, c3, 'sub', l3);
  if (dx) {
    wire(r3, y, dx);
    node(dx, dx + 70.2, y, C.debug, 'list', dl, { it: 1, right: 1, noOut: 1, button: 'right', off: dl === 'debug 8' });
  }
});
const yi = Y0 + STEP * 10, yb = Y0 + STEP * 11;
wire(585, yi, 620); wire(690.5, yi, 760.3);
node(620, 690.5, yi, C.base, '64', 'base64');
node(760.3, 842.5, yi, C.deep, 'code', 'Image box', { it: 1 });
wire(351, yb, 385.7); wire(503, yb, 514.3); wire(608.5, yb, 620); wire(737, yb, 760.3);
node(245.3, 351, yb, C.aqua, 'hand', 'Capture Barcode');
node(385.7, 503, yb, C.change, 'change', 'Capture Image Input', { it: 1 });
node(514.3, 608.5, yb, C.brown, 'sub', 'AcquireBarcode');
node(620, 737, yb, C.orange, 'fn', 'Extract Decode data', { it: 1 });
node(760.3, 830.5, yb, C.mid, 'A', 'BardCode', { right: 1, noOut: 1 });

const yd = 508.4;
wire(351, yd, 385.7);
node(245.3, 351, yd, C.inject, 'inject', 'Device Initialization', { it: 1, noIn: 1, button: 'left' });
['Open Brainbox ED527', 'Open Basler Camera', 'Open Denso Robot', 'Open Single Axis ACS', 'Open Barcode Reader'].forEach((label, i) => {
  const y = yd + STEP * i, r = i === 2 ? 491.3 : 503;
  node(385.7, r, y, C.sand, 'sub', label);
  if (i < 4) wires += `<path d="M${r} ${y}h3C${r + 12} ${y} ${r + 16.5} ${y + 2} ${r + 16.5} ${y + 5.3}S${r + 12} ${y + 11} ${r} ${y + 11.2}L386 ${y + 12.3}C374 ${y + 12.5} 369.500 ${y + 14} 369.500 ${y + 18}S374 ${y + STEP} 386 ${y + STEP}"/>`;
});
const ye = yd + STEP * 4;
wire(503, ye, 561.3);
node(561.3, 631.5, ye, C.debug, 'list', 'debug 14', { it: 1, right: 1, noOut: 1, button: 'right' });

let grid = '';
for (let x = 233; x < 1057; x += 11.72) grid += `M${x.toFixed(1)} 169V628`;
for (let y = 180.3; y < 628; y += 11.725) grid += `M222 ${y.toFixed(1)}H1057`;
document.getElementById('canvas').innerHTML =
  `<path d="${grid}" stroke="#ececee" stroke-width=".9"/><g fill="none" stroke="#999" stroke-width="1.700">${wires}</g>${nodes}`;
```
